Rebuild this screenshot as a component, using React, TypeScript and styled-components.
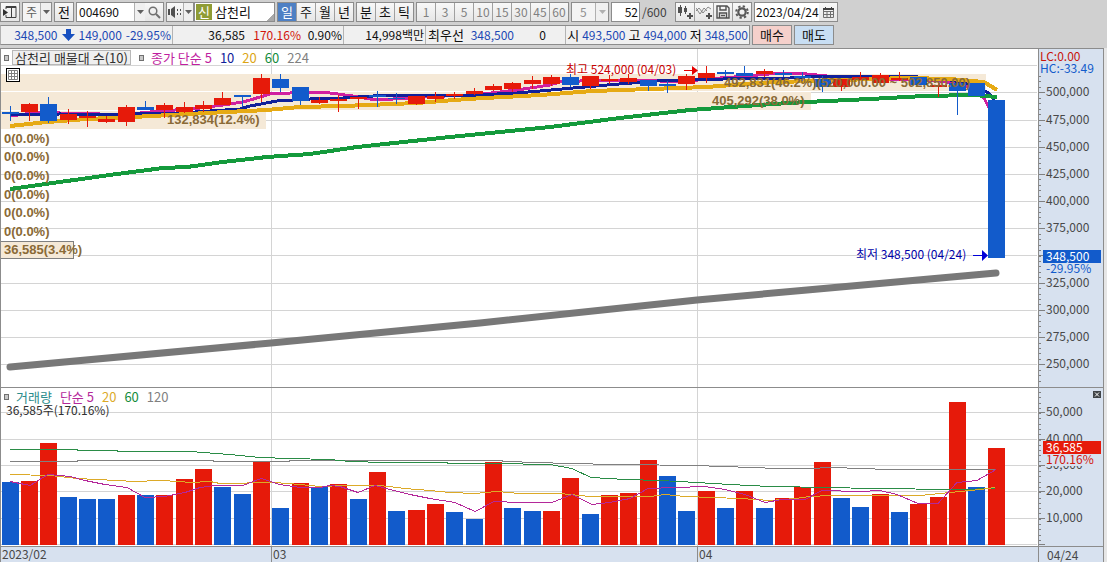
import React from 'react';
import styled, { createGlobalStyle } from 'styled-components';

const RED = '#e61a0a';
const BLUE = '#125bcb';
const AXIS_BG = '#d7e1ef';
const FRAME = '#8c8c8c';
const FONT = "'Noto Sans CJK KR', 'Liberation Sans', sans-serif";

const GlobalStyle = createGlobalStyle`
  * { box-sizing: border-box; }
  body {
    margin: 0;
    background: #d0d0d0;
    color: #101010;
    font: 12px/16px ${FONT};
  }
  button, input, select { font: inherit; color: inherit; margin: 0; padding: 0; border-radius: 0; }
`;

/* ---------- toolbar ---------- */

const Toolbar = styled.header`
  display: flex;
  flex-direction: column;
  gap: 3px;
  padding: 2px 0 3px;
  white-space: nowrap;
`;

const Row = styled.div`
  display: flex;
  gap: 2px;
  height: 20px;
`;

const Group = styled.div<{ $joined?: boolean }>`
  display: flex;
  border: 1px solid ${FRAME};
  background: #f0f0f0;
  margin-right: ${(p) => (p.$joined ? -2 : 0)}px;
`;

const ToolButton = styled.button<{ $w?: number; $active?: boolean; $muted?: boolean }>`
  display: flex;
  align-items: center;
  justify-content: center;
  width: ${(p) => p.$w ?? 18}px;
  border: 0;
  font-size: ${(p) => (p.$muted ? 12 : 13)}px;
  background: ${(p) => (p.$active ? '#4e80c4' : 'linear-gradient(#f8f8f8, #e6e6e6)')};
  color: ${(p) => (p.$active ? '#fff' : p.$muted ? '#808080' : '#101010')};
  & + & { border-left: 1px solid #a0a0a0; width: ${(p) => (p.$w ?? 18) + 1}px; }
`;

const Field = styled.input<{ $w: number; $right?: boolean }>`
  width: ${(p) => p.$w}px;
  border: 0;
  padding: 0 1px 0 2px;
  background: #fff;
  outline: 0;
  text-align: ${(p) => (p.$right ? 'right' : 'left')};
`;

const DateField = styled(Field)`
  padding: 0 0 0 1px;
`;

const Picker = styled.select<{ $w: number; $muted?: boolean }>`
  width: ${(p) => p.$w}px;
  appearance: none;
  border: 0;
  padding: 0 0 0 ${(p) => (p.$muted ? 8 : 3)}px;
  background: #f4f4f4;
  color: ${(p) => (p.$muted ? '#909090' : '#606060')};
  outline: 0;
`;

const Drop = styled.span<{ $w?: number }>`
  display: flex;
  align-items: center;
  justify-content: center;
  width: ${(p) => p.$w ?? 11}px;
  border-left: 1px solid #b0b0b0;
`;

const Badge = styled.span`
  width: 16px;
  margin: 1px;
  background: #8f9c35;
  color: #fff;
  font-size: 13px;
  text-align: center;
`;

const StockField = styled.label`
  display: flex;
  background: linear-gradient(135deg, #fff 92%, #a8a8a8 92%);
  input { background: transparent; font-size: 13px; }
`;

const Total = styled.span`
  width: 31px;
  padding-top: 2px;
  color: #404040;
`;

const Quote = styled.dl`
  display: flex;
  margin: 0;
  border: 1px solid ${FRAME};
  border-left-color: #b0b0b0;
  background: #f0f0f0;
  line-height: 18px;
`;

const QuoteCell = styled.dd<{ $w: number; $tight?: boolean }>`
  display: flex;
  align-items: center;
  justify-content: flex-end;
  gap: ${(p) => (p.$tight ? 3 : 4)}px;
  width: ${(p) => p.$w}px;
  margin: 0;
  padding-right: 1px;
  & + & { border-left: 1px solid #b4b4b4; }
`;

const Value = styled.span<{ $tone?: string; $w?: number }>`
  min-width: ${(p) => p.$w ?? 43}px;
  color: ${(p) => p.$tone ?? '#101010'};
  text-align: right;
`;

const Name = styled.span`
  font-size: 13px;
`;

const TradeButton = styled.button<{ $bg: string }>`
  width: 40px;
  border: 1px solid ${FRAME};
  background: ${(p) => p.$bg};
  font-size: 13px;
`;

/* ---------- chart ---------- */

const ChartShell = styled.main`
  background: #e6e6e6;
  padding-right: 3px;
`;

const ChartFrame = styled.div`
  display: grid;
  grid-template-columns: minmax(0, 1fr) 65px;
  border: 1px solid ${FRAME};
  border-bottom: 0;
  background: #fff;
`;

const Pane = styled.section<{ $h: number }>`
  position: relative;
  height: ${(p) => p.$h}px;
  border-bottom: 1px solid ${FRAME};
  svg { display: block; }
`;

const Axis = styled.div<{ $h: number }>`
  position: relative;
  height: ${(p) => p.$h}px;
  background: ${AXIS_BG};
  border-left: 1px solid ${FRAME};
  border-bottom: 1px solid ${FRAME};
  svg { display: block; }
`;

const Legend = styled.div`
  position: absolute;
  top: 1px;
  left: 3px;
  display: flex;
  align-items: center;
  gap: 8px;
  height: 15px;
  font-size: 13px;
  line-height: 15px;
  white-space: nowrap;
`;

const Bullet = styled.i<{ $tight?: boolean }>`
  width: 5px;
  height: 6px;
  margin-right: ${(p) => (p.$tight ? -5 : -1)}px;
  border: 1px solid #707070;
  background: #c8c8c8;
`;

const StudyButton = styled.button`
  height: 15px;
  width: 119px;
  border: 1px solid #b8b8b8;
  background: #efefef;
  line-height: 12px;
  color: #303030;
`;

const Tone = styled.span<{ $c: string }>`
  color: ${(p) => p.$c};
`;

const VolumeNote = styled.div`
  position: absolute;
  top: 14px;
  left: 5px;
  color: #303030;
  white-space: nowrap;
`;

const GridToggle = styled.button`
  position: absolute;
  top: 19px;
  left: 5px;
  width: 14px;
  height: 14px;
  border: 1px solid #000;
  background: #fff;
`;

const CloseButton = styled.button`
  position: absolute;
  top: 3px;
  right: 2px;
  width: 8px;
  height: 7px;
  border: 0;
  background: #404448;
`;

const ProfileText = styled.text`
  font: bold 13px 'Liberation Sans', sans-serif;
  fill: #8a6a36;
`;

const Mark = styled.text`
  font: 12px ${FONT};
`;

const AxisText = styled.text<{ $c?: string }>`
  font: 12px ${FONT};
  fill: ${(p) => p.$c ?? '#484848'};
`;

const DateAxis = styled.div`
  position: relative;
  height: 16px;
  background: ${AXIS_BG};
  svg { display: block; }
`;

const DateEnd = styled.div`
  height: 16px;
  padding-left: 8px;
  border-left: 1px solid ${FRAME};
  background: ${AXIS_BG};
  color: #484848;
`;

/* ---------- data ---------- */

const PLOT_W = 1037;
const PRICE_TOP = 49;
const VOL_TOP = 388;
const PRICE_H = 338;
const VOL_H = 158;

const barX = (i: number) => 2 + Math.floor((i * 58 + 0.5) / 3);
const pct = (x: number) => `${((x - 1) / PLOT_W) * 100}%`;

// direction, body top, body bottom, high, low
type Candle = [0 | 1, number, number, number, number];
const candles: Candle[] = [
  [0, 112, 114, 106, 121], [1, 104, 112, 103, 121], [0, 104, 121, 97, 123], [1, 114, 120, 109, 124],
  [1, 116, 118, 111, 127], [1, 119, 122, 116, 123], [1, 107, 122, 105, 126], [0, 107, 110, 101, 110],
  [1, 105, 110, 103, 118], [1, 107, 112, 102, 113], [1, 105, 109, 101, 112], [1, 98, 105, 92, 105],
  [0, 95, 97, 95, 107], [1, 78, 94, 74, 102], [0, 79, 88, 74, 92], [0, 87, 101, 87, 105],
  [1, 100, 103, 97, 104], [1, 99, 101, 95, 112], [1, 97, 99, 97, 109], [0, 95, 97, 91, 107],
  [0, 98, 99, 93, 104], [1, 96, 104, 96, 105], [1, 96, 99, 92, 102], [1, 94, 96, 92, 99],
  [1, 91, 94, 88, 95], [1, 86, 90, 84, 91], [1, 83, 89, 82, 92], [1, 80, 84, 76, 89],
  [1, 77, 84, 75, 86], [0, 77, 85, 74, 87], [1, 76, 86, 76, 89], [1, 79, 81, 75, 84],
  [1, 78, 82, 74, 84], [0, 80, 86, 80, 91], [0, 84, 86, 81, 93], [1, 76, 84, 74, 90],
  [1, 73, 78, 66, 83], [0, 72, 74, 70, 77], [0, 73, 76, 66, 76], [1, 71, 74, 69, 77],
  [0, 73, 75, 70, 77], [0, 76, 78, 72, 81], [0, 79, 87, 76, 92], [1, 79, 87, 79, 91],
  [1, 77, 80, 72, 80], [1, 75, 83, 73, 83], [1, 78, 80, 72, 81], [0, 77, 85, 77, 85],
  [1, 85, 87, 83, 97], [0, 83, 91, 83, 115], [0, 83, 96, 83, 96], [0, 100, 258, 100, 258],
];

const volumeColors = 'BRRBBBRBRRRBBRBRBRBRBRRBBRBBRRBRRRBBRBRBRRRBBRBRRRBR';
const volumeTops = [
  482, 481, 443, 497, 499, 499, 495, 495, 495, 479, 469, 487, 494, 462, 508, 483, 487, 484, 499, 472,
  511, 510, 504, 512, 519, 462, 508, 511, 511, 478, 514, 495, 493, 460, 476, 511, 491, 508, 491, 508,
  498, 487, 462, 498, 507, 494, 512, 504, 497, 402, 487, 448,
];

const priceLines = [
  {
    color: '#d020a0', width: 3,
    points: '10,116 40,112 60,113 95,113 110,116 150,112 200,108 223,105 243,102 250,100 270,94 290,93 310,92 330,93 353,96 370,99 393,99 423,97 467,95 483,94 517,90 550,85 560,82 600,80 640,80 680,82 707,79 747,76 780,73 807,74 827,76 840,78 874,80 907,79 940,81 964,85 977,90 984,98 989,108',
  },
  {
    color: '#10209a', width: 3,
    points: '10,115 60,114 120,115 150,113 180,113 210,111 240,109 250,106 277,101 310,99 343,98 373,96 390,95 477,95 517,93 540,91 607,85 657,81 723,79 790,78 820,76 907,76 950,80 974,85 990,94 996,104',
  },
  {
    color: '#e6aa14', width: 4,
    points: '10,126 47,122 87,119 133,117 207,113 267,110 300,107 343,106 417,103 467,99 540,95 593,91 707,87 757,83 807,81 907,78 950,79 984,82 997,90',
  },
  {
    color: '#149a3c', width: 4,
    points: '10,189 67,181 117,174 163,168 187,167 223,162 267,157 310,154 357,147 450,137 550,127 620,118 690,110 773,104 807,102 870,99 924,96 974,95 997,97',
  },
];

const volumeLines = [
  {
    color: '#808080',
    points: '10,461 77,461 78,460 213,460 214,461 289,461 290,460 502,460 503,461 540,462 565,463 620,464 697,465 720,466 755,467 775,468 807,468 833,467 860,468 890,469 995,469',
  },
  {
    color: '#2a8c46',
    points: '10,449 77,449 78,450 117,450 118,451 190,451 230,454 260,457 290,458 330,459 350,461 385,462 445,462 450,463 495,463 550,464 572,468 591,477 625,479 660,480 697,482 730,484 770,486 830,487 870,488 960,489 995,488',
  },
  {
    color: '#dcaa28',
    points: '10,474 50,475 77,478 117,480 135,481 160,480 180,481 190,482 210,481 220,483 275,482 300,484 320,486 345,485 380,485 405,488 430,490 450,492 475,493 497,491 520,493 560,493 590,496 650,496 665,494 685,496 740,498 770,500 795,498 810,496 830,495 920,495 940,493 960,491 980,489 995,487',
  },
  {
    color: '#b4289a',
    points: '10,481 30,485 48,474 70,476 85,480 105,484 127,487 145,497 165,496 185,492 200,487 215,485 243,485 261,478 280,484 300,487 320,487 330,485 340,486 358,492 375,485 390,489 410,494 430,498 455,502 475,511 494,501 520,502 552,502 572,494 592,504 610,502 630,498 648,488 675,487 705,486 725,489 745,494 765,502 782,499 805,499 822,490 860,491 880,490 897,494 918,503 938,503 957,482 977,480 996,469',
  },
];

const priceGrid = [65, 92, 120, 147, 174, 201, 228, 255, 283, 310, 337, 364];
const volumeGrid = [412, 439, 465, 491, 518, 544];
const monthLines = [271, 697];
const zeroRows = [143, 161, 180, 199, 217, 236];

/* ---------- icons ---------- */

const Caret = ({ color = '#606060' }: { color?: string }) => (
  <svg width="7" height="4" aria-hidden><path d="M0 0h7L3.500 4z" fill={color} /></svg>
);

const PanelIcon = () => (
  <svg width="14" height="14" aria-hidden fill="none" stroke="#404040">
    <path d="M3 4V1.500h10v11H3V10M8.500 2v10M3 2.500h10" /><path d="M0 4l5 3.500L0 11z" fill="#303030" stroke="none" />
  </svg>
);

const SearchIcon = () => (
  <svg width="13" height="13" aria-hidden fill="none" stroke="#707070" strokeWidth="1.500">
    <circle cx="5" cy="5" r="3.800" /><path d="M8 8l4 4" strokeWidth="2" />
  </svg>
);

const SpeakerIcon = () => (
  <svg width="14" height="12" aria-hidden fill="#505050">
    <path d="M0 3h2v6H0zM3 3l4-3v12L3 9zM9 3h1v2H9zM9 7h1v2H9zM12 3h1v2h-1zM12 7h1v2h-1z" />
  </svg>
);

const CandleAddIcon = () => (
  <svg width="16" height="14" aria-hidden fill="#505050">
    <path d="M1 2h4v6H1zM3 0h1v11H3zM7 3h3v4H7zM8 1h1v8H8z" />
    <path d="M12 8h2v2h2v2h-2v2h-2v-2h-2v-2h2z" />
  </svg>
);

const LineAddIcon = () => (
  <svg width="16" height="14" aria-hidden fill="none" stroke="#707070">
    <path d="M0 6l3-3 4 5 5-6 3 2M0 3l4 6 4-6 3 3" strokeWidth=".8" />
    <path d="M12 8h2v2h2v2h-2v2h-2v-2h-2v-2h2z" fill="#505050" stroke="none" />
  </svg>
);

const SaveIcon = () => (
  <svg width="14" height="14" aria-hidden fill="none" stroke="#505050" strokeWidth="1.400">
    <path d="M1 1h10l2 2v10H1zM4 1v4h6V1M3.500 13V8h7v5M5 10.500h4" />
  </svg>
);

const GearIcon = () => (
  <svg width="14" height="14" aria-hidden fill="none" stroke="#585858">
    <circle cx="7" cy="7" r="3.700" strokeWidth="2.200" />
    <circle cx="7" cy="7" r="5.800" strokeWidth="2" strokeDasharray="2.280 2.280" />
  </svg>
);

const CalendarIcon = () => (
  <svg width="11" height="11" aria-hidden>
    <path d="M.5 1.500h10v9H.5zM.5 4.500h10M.5 7.500h10M4 4v6M7.500 4v6" fill="none" stroke="#707070" />
    <path d="M0 1h11v2H0zM2 0h1v2H2zM8 0h1v2H8z" fill="#404040" />
  </svg>
);

/* ---------- parts ---------- */

type Line = { color: string; points: string; width?: number };

const Lines = ({ items }: { items: Line[] }) => (
  <>
    {items.map((l) => (
      <polyline key={l.color} points={l.points} fill="none" stroke={l.color} strokeWidth={l.width ?? 1} shapeRendering="crispEdges" />
    ))}
  </>
);

const Grid = ({ ys, top, bottom }: { ys: number[]; top: number; bottom: number }) => (
  <g fill="#d4d4d4" shapeRendering="crispEdges">
    {ys.map((y) => <rect key={y} x="1" y={y} width="1036" height="1" />)}
    {monthLines.map((x) => <rect key={x} x={x} y={top} width="1" height={bottom - top} />)}
  </g>
);

const Ticks = ({ from, to, step, majors, top }: { from: number; to: number; step: number; majors: number[]; top: number }) => (
  <g fill="#808080" shapeRendering="crispEdges">
    {Array.from({ length: Math.floor((to - from) / step) + 1 }, (_, i) => (
      <rect key={i} x="0" y={Math.round(from + i * step) - top} width="2" height="1" />
    ))}
    {majors.map((y) => <rect key={y} x="0" y={y - top} width="6" height="1" />)}
  </g>
);

const PricePlot = () => (
  <svg width="100%" height={PRICE_H}>
    <svg width="100%" height={PRICE_H} viewBox={`1 ${PRICE_TOP} ${PLOT_W} ${PRICE_H}`} preserveAspectRatio="none">
      <Grid ys={priceGrid} top={PRICE_TOP} bottom={387} />
      <g fill="#f5e9d7">
        <rect x="1" y="74" width="985" height="17" />
        <rect x="1" y="92" width="810" height="18" />
        <rect x="1" y="111" width="265" height="18" />
        <rect x="0.500" y="241.500" width="73" height="17" stroke="#808080" />
      </g>
      <polyline points="10,367 271,343 480,323 697,300 807,290 996,273" fill="none" stroke="#787878" strokeWidth="7" strokeLinecap="round" strokeLinejoin="round" />
      <Lines items={priceLines} />
      <g shapeRendering="crispEdges">
        {candles.map(([up, top, bottom, high, low], i) => (
          <g key={i} fill={up ? RED : BLUE}>
            <rect x={barX(i)} y={top} width="17" height={bottom - top} />
            <rect x={barX(i) + 8} y={high} width="1" height={low - high} />
          </g>
        ))}
      </g>
      <path d="M684 70h8v-4l6 4.500-6 4.500v-4h-8z" fill="#e60000" />
      <path d="M973 255h9v-5l6 5.500-6 5.500v-5h-9z" fill="#0000d8" />
    </svg>
    <Mark x={pct(566)} y={74 - PRICE_TOP} fill="#c80000">최고 524,000 (04/03)</Mark>
    <Mark x={pct(856)} y={259 - PRICE_TOP} fill="#0000a8">최저 348,500 (04/24)</Mark>
    <ProfileText x={pct(724)} y={87 - PRICE_TOP}>492,831(46.2%)(520,000.00 ~ 502,850.00)</ProfileText>
    <ProfileText x={pct(712)} y={105 - PRICE_TOP}>405,292(38.0%)</ProfileText>
    <ProfileText x={pct(167)} y={124 - PRICE_TOP}>132,834(12.4%)</ProfileText>
    {zeroRows.map((y) => <ProfileText key={y} x={pct(4)} y={y - PRICE_TOP}>0(0.0%)</ProfileText>)}
    <ProfileText x={pct(4)} y={254 - PRICE_TOP}>36,585(3.4%)</ProfileText>
  </svg>
);

const PriceAxis = () => (
  <svg width="64" height={PRICE_H}>
    <Ticks from={76} to={384} step={5.44} majors={priceGrid.slice(1)} top={PRICE_TOP} />
    {priceGrid.slice(1).map((y, i) => (
      <AxisText key={y} x="7" y={y + 4 - PRICE_TOP}>{`${500 - i * 25},000`}</AxisText>
    ))}
    <rect x="4" y={250 - PRICE_TOP} width="58" height="13" fill={BLUE} />
    <AxisText x="7" y={261 - PRICE_TOP} $c="#fff">348,500</AxisText>
    <rect x="4" y={263 - PRICE_TOP} width="58" height="11" fill={AXIS_BG} />
    <AxisText x="7" y={273 - PRICE_TOP} $c={BLUE}>-29.95%</AxisText>
    <AxisText x="1" y={61 - PRICE_TOP} $c="#c8140a">LC:0.00</AxisText>
    <AxisText x="1" y={73 - PRICE_TOP} $c={BLUE}>HC:-33.49</AxisText>
  </svg>
);

const VolumePlot = () => (
  <svg width="100%" height={VOL_H} viewBox={`1 ${VOL_TOP} ${PLOT_W} ${VOL_H}`} preserveAspectRatio="none">
    <Grid ys={volumeGrid} top={VOL_TOP} bottom={546} />
    <g shapeRendering="crispEdges">
      {volumeTops.map((y, i) => (
        <rect key={i} x={barX(i)} y={y} width="17" height={545 - y} fill={volumeColors[i] === 'R' ? RED : BLUE} />
      ))}
    </g>
    <g transform="translate(0 .5)"><Lines items={volumeLines} /></g>
  </svg>
);

const VolumeAxis = () => (
  <svg width="64" height={VOL_H}>
    <Ticks from={392} to={544} step={5.28} majors={volumeGrid} top={VOL_TOP} />
    {volumeGrid.slice(0, 5).map((y, i) => (
      <AxisText key={y} x="7" y={y + 4 - VOL_TOP}>{`${50 - i * 10},000`}</AxisText>
    ))}
    <rect x="4" y={441 - VOL_TOP} width="58" height="13" fill={RED} />
    <AxisText x="7" y={452 - VOL_TOP} $c="#fff">36,585</AxisText>
    <rect x="7" y={454 - VOL_TOP} width="55" height="12" fill={AXIS_BG} />
    <AxisText x="7" y={464 - VOL_TOP} $c="#d2140a">170.16%</AxisText>
  </svg>
);

const minutes = ['1', '3', '5', '10', '15', '30', '45', '60'];

export default function App() {
  return (
    <>
      <GlobalStyle />
      <Toolbar>
        <Row>
          <Group><ToolButton aria-label="패널"><PanelIcon /></ToolButton></Group>
          <Group>
            <Picker $w={17} aria-label="종목 구분" defaultValue="주"><option>주</option></Picker>
            <Drop><Caret /></Drop>
          </Group>
          <Group><ToolButton>전</ToolButton></Group>
          <Group>
            <Field $w={57} aria-label="종목코드" defaultValue="004690" />
            <Drop><Caret /></Drop>
            <ToolButton aria-label="검색"><SearchIcon /></ToolButton>
          </Group>
          <Group $joined>
            <ToolButton $w={16} aria-label="소리"><SpeakerIcon /></ToolButton>
            <Drop $w={10}><Caret /></Drop>
          </Group>
          <Group>
            <StockField><Badge>신</Badge><Field $w={61} aria-label="종목명" defaultValue="삼천리" /></StockField>
          </Group>
          <Group>
            <ToolButton $active>일</ToolButton>
            <ToolButton>주</ToolButton>
            <ToolButton>월</ToolButton>
            <ToolButton $w={17}>년</ToolButton>
          </Group>
          <Group>
            <ToolButton>분</ToolButton>
            <ToolButton>초</ToolButton>
            <ToolButton $w={17}>틱</ToolButton>
          </Group>
          <Group>
            {minutes.map((m) => <ToolButton key={m} $muted>{m}</ToolButton>)}
          </Group>
          <Group>
            <Picker $w={23} $muted aria-label="분 단위" defaultValue="5"><option>5</option></Picker>
            <Drop $w={13}><Caret color="#b0b0b0" /></Drop>
          </Group>
          <Group><Field $w={27} $right aria-label="표시 봉수" defaultValue="52" /></Group>
          <Total>/600</Total>
          <Group>
            <ToolButton aria-label="봉 추가"><CandleAddIcon /></ToolButton>
            <ToolButton aria-label="지표 추가"><LineAddIcon /></ToolButton>
            <ToolButton aria-label="저장"><SaveIcon /></ToolButton>
            <ToolButton $w={17} aria-label="설정"><GearIcon /></ToolButton>
          </Group>
          <Group>
            <DateField $w={64} aria-label="날짜" defaultValue="2023/04/24" />
            <ToolButton aria-label="달력"><CalendarIcon /></ToolButton>
          </Group>
        </Row>
        <Row>
          <Quote>
            <QuoteCell $w={171}>
              <Value $tone="#1c48b4">348,500</Value>
              <svg width="13" height="12" aria-hidden><path d="M4 0h5v5h4l-6.500 7L0 5h4z" fill="#1850c0" /></svg>
              <Value $tone="#1c48b4">149,000</Value>
              <Value $tone="#1c48b4">-29.95%</Value>
            </QuoteCell>
            <QuoteCell $w={171}>
              <Value>36,585</Value>
              <Value $tone="#d2140a" $w={52}>170.16%</Value>
              <Value $w={37}>0.90%</Value>
            </QuoteCell>
            <QuoteCell $w={82}><Value $w={60}>14,998백만</Value></QuoteCell>
            <QuoteCell $w={140}>
              <Name>최우선</Name>
              <Value $tone="#1c48b4" $w={46}>348,500</Value>
              <Value $w={28}>0</Value>
              <Value $w={14} />
            </QuoteCell>
            <QuoteCell $w={184} $tight>
              <Name>시</Name><Value $tone="#1c48b4">493,500</Value>
              <Name>고</Name><Value $tone="#1c48b4">494,000</Value>
              <Name>저</Name><Value $tone="#1c48b4">348,500</Value>
            </QuoteCell>
          </Quote>
          <TradeButton $bg="#f5d0cb">매수</TradeButton>
          <TradeButton $bg="#c8def3">매도</TradeButton>
        </Row>
      </Toolbar>
      <ChartShell>
        <ChartFrame>
          <Pane $h={PRICE_H + 1}>
            <PricePlot />
            <Legend>
              <Bullet $tight />
              <StudyButton>삼천리 매물대 수(10)</StudyButton>
              <Bullet />
              <Tone $c="#c01ea0">종가 단순 5</Tone>
              <Tone $c="#10209a">10</Tone>
              <Tone $c="#dca514">20</Tone>
              <Tone $c="#148c3c">60</Tone>
              <Tone $c="#808080">224</Tone>
            </Legend>
            <GridToggle aria-label="표 보기">
              <svg width="12" height="12" aria-hidden>
                <path d="M1.500 1.500h9v9h-9zM1.500 4.500h9M4.500 1.500v9M7.500 1.500v9M1.500 7.500h9" fill="none" stroke="#808080" />
              </svg>
            </GridToggle>
          </Pane>
          <Axis $h={PRICE_H + 1}><PriceAxis /></Axis>
          <Pane $h={VOL_H + 1}>
            <VolumePlot />
            <Legend>
              <Bullet />
              <Tone $c="#2a8c8c">거래량</Tone>
              <Tone $c="#b4289a">단순 5</Tone>
              <Tone $c="#dcaa28">20</Tone>
              <Tone $c="#148c3c">60</Tone>
              <Tone $c="#808080">120</Tone>
            </Legend>
            <VolumeNote>36,585주(170.16%)</VolumeNote>
          </Pane>
          <Axis $h={VOL_H + 1}>
            <VolumeAxis />
            <CloseButton aria-label="닫기">
              <svg width="8" height="7" aria-hidden><path d="M2 1.500l4 4M6 1.500l-4 4" stroke="#fff" fill="none" /></svg>
            </CloseButton>
          </Axis>
          <DateAxis>
            <svg width="100%" height="16">
              {monthLines.map((x) => <rect key={x} x={pct(x)} y="0" width="1" height="16" fill={FRAME} />)}
              <AxisText x={pct(2)} y="12">2023/02</AxisText>
              <AxisText x={pct(273)} y="12">03</AxisText>
              <AxisText x={pct(699)} y="12">04</AxisText>
            </svg>
          </DateAxis>
          <DateEnd>04/24</DateEnd>
        </ChartFrame>
      </ChartShell>
    </>
  );
}
